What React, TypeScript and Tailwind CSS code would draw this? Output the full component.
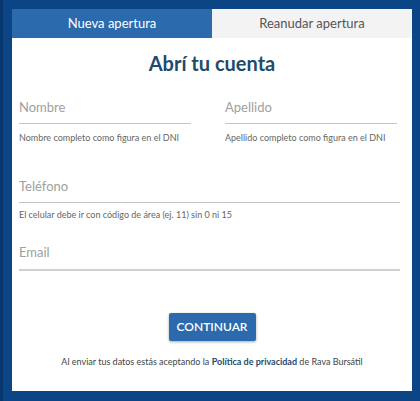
export default function App() {
  return (
    <div
      className="h-[401px] w-[420px] overflow-hidden border-l-[3px] border-[#06376f] bg-[#0b4585] pl-[9px] pt-[9px]"
      style={{ fontFamily: 'Lato, "Open Sans", sans-serif' }}
    >
      <div className="flex h-[382px] w-[400px] flex-col bg-white">
        {/* tabs */}
        <div className="grid h-[29px] grid-cols-2 text-[13px]">
          <div className="flex items-center justify-center bg-[#2b6aac] text-white">Nueva apertura</div>
          <div className="flex items-center justify-center bg-[#f3f3f3] text-[#555]">Reanudar apertura</div>
        </div>

        <h1 className="mt-[13px] text-center text-[20px] font-bold leading-[24px] text-[#1d4b6c]">
          Abrí tu cuenta
        </h1>

        <div className="pl-[7px] pr-[12px]">
          <div className="mt-[24px] grid grid-cols-[172px_172px] gap-x-[34px]">
            <div>
              <div className="border-b border-[#c4c4c4] pb-[8px] text-[13px] leading-[16px] text-[#a0a0a0]">Nombre</div>
              <p className="mt-[8px] text-[9px] leading-[12px] text-[#666]">Nombre completo como figura en el DNI</p>
            </div>
            <div>
              <div className="border-b border-[#c4c4c4] pb-[8px] text-[13px] leading-[16px] text-[#a0a0a0]">Apellido</div>
              <p className="mt-[8px] text-[9px] leading-[12px] text-[#666]">Apellido completo como figura en el DNI</p>
            </div>
          </div>

          <div className="mt-[34px] border-b border-[#c4c4c4] pb-[8px] text-[13px] leading-[16px] text-[#a0a0a0]">Teléfono</div>
          <p className="mt-[6px] text-[9px] leading-[12px] text-[#666]">
            El celular debe ir con código de área (ej. 11) sin 0 ni 15
          </p>

          <div className="mt-[23px] border-b-2 border-[#d0d0d0] pb-[9px] text-[13px] leading-[16px] text-[#a0a0a0]">Email</div>
        </div>

        <div className="mt-[42px] flex justify-center">
          <button className="h-[28px] w-[87px] rounded-[2px] bg-[#2b6aac] text-[12px] font-semibold text-white shadow-[0_1px_3px_rgba(0,0,0,0.35)]">
            CONTINUAR
          </button>
        </div>

        <p className="mt-[15px] text-center text-[9px] leading-[12px] text-[#444]">
          Al enviar tus datos estás aceptando la{' '}
          <span className="font-bold text-[#1d4b6c]">Política de privacidad</span> de Rava Bursátil
        </p>
      </div>
    </div>
  );
}
